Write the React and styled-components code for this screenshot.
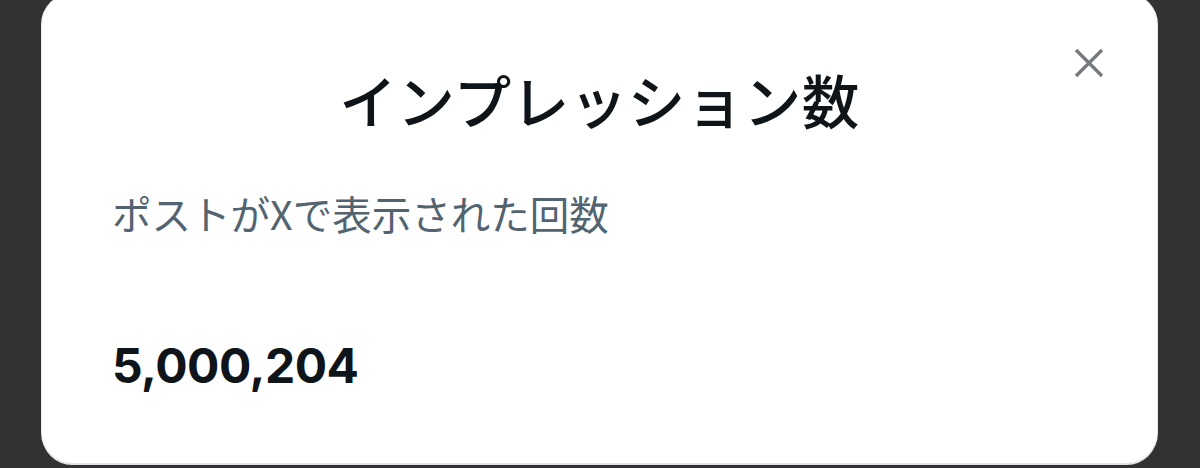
import React from "react";
import styled, { createGlobalStyle } from "styled-components";

const GlobalStyle = createGlobalStyle`
  html, body {
    margin: 0;
    padding: 0;
    background: #323232;
    height: 100%;
    overflow: hidden;
  }
  #root {
    height: 100%;
  }
`;

const Page = styled.div`
  height: 468px;
  padding: 0 43px 0 42px;
  box-sizing: border-box;
`;

const Card = styled.section`
  margin-top: -6px;
  height: 469px;
  box-sizing: border-box;
  background: #fff;
  border-radius: 30px;
  box-shadow: 0 2px 0 #dfe3e7, 1px 0 0 #e6e9ec, -1px 0 0 #e6e9ec;
  padding: 0 0 0 70px;
  display: flex;
  flex-direction: column;
  position: relative;
  font-family: Inter, "Noto Sans CJK JP", sans-serif;
`;

const Title = styled.h1`
  margin: 65px 70px 0 0;
  text-align: center;
  font-family: "Noto Sans CJK JP", sans-serif;
  font-size: 57.5px;
  font-weight: 500;
  line-height: 80px;
  color: #0f1419;
  letter-spacing: 0.5px;
`;

const CloseButton = styled.button`
  position: absolute;
  top: 54px;
  right: 53px;
  width: 30px;
  height: 30px;
  padding: 0;
  border: 0;
  background: none;
  cursor: pointer;
  color: #75787c;
`;

const Subtitle = styled.p`
  margin: 46px 0 0;
  font-family: "Noto Sans CJK JP", sans-serif;
  font-size: 39.5px;
  font-weight: 400;
  line-height: 56px;
  color: #536471;
`;

const Count = styled.div`
  margin-top: 95px;
  font-family: Inter, "Liberation Sans", sans-serif;
  font-size: 48px;
  font-weight: 700;
  letter-spacing: -0.5px;
  line-height: 60px;
  color: #0f1419;
`;

function App() {
  return (
    <>
      <GlobalStyle />
      <Page>
        <Card>
          <CloseButton aria-label="閉じる">
            <svg width="30" height="30" viewBox="0 0 30 30">
              <path
                d="M2 2 L28 28 M28 2 L2 28"
                stroke="currentColor"
                strokeWidth="3.2"
                fill="none"
              />
            </svg>
          </CloseButton>
          <Title>インプレッション数</Title>
          <Subtitle>ポストがXで表示された回数</Subtitle>
          <Count>5,000,204</Count>
        </Card>
      </Page>
    </>
  );
}

export default App;
